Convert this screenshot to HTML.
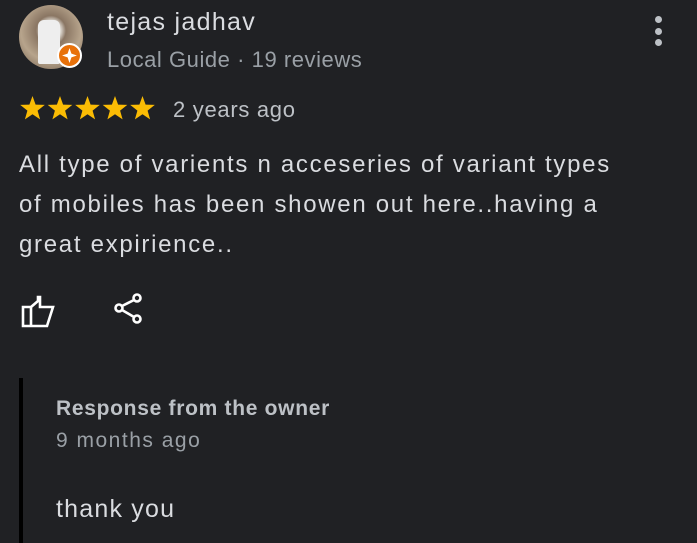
<!DOCTYPE html>
<html><head><style>
body{margin:0;width:697px;height:543px;background:#202124;font-family:"Liberation Sans",Roboto,sans-serif;overflow:hidden;position:relative;color:#e8eaed}
.a{position:absolute;white-space:nowrap}
</style></head><body>
<div class="a" style="left:19px;top:5px;width:64px;height:64px;border-radius:50%;background:radial-gradient(circle at 50% 40%,#e9e6e0 0 18%,#8a7663 30%,#b7a48c 60%,#6d5a48);"></div>
<div class="a" style="left:38px;top:20px;width:22px;height:44px;background:#eee;border-radius:6px 6px 2px 2px"></div>
<div class="a" style="left:57px;top:43px;width:25px;height:25px;border-radius:50%;background:#e8710a;border:2px solid #fff;box-sizing:border-box"></div>
<svg class="a" style="left:61px;top:47px" width="17" height="17" viewBox="0 0 16 16"><path d="M8 1 L9.8 6.2 L15 8 L9.8 9.8 L8 15 L6.2 9.8 L1 8 L6.2 6.2Z" fill="#fff"/></svg>
<div class="a" style="left:107px;top:8px;font-size:25px;color:#dadce0;letter-spacing:1.3px">tejas jadhav</div>
<div class="a" style="left:107px;top:47px;font-size:22px;color:#9aa0a6;letter-spacing:0.55px">Local Guide · 19 reviews</div>
<svg class="a" style="left:19px;top:95px" width="140" height="27" viewBox="0 0 140 27">
<defs><path id="s" d="M13.5 1 L16.6 9.6 L25.8 9.9 L18.6 15.6 L21.1 24.4 L13.5 19.3 L5.9 24.4 L8.4 15.6 L1.2 9.9 L10.4 9.6Z" fill="#fbbc04"/></defs>
<use href="#s"/><use href="#s" x="27.5"/><use href="#s" x="55"/><use href="#s" x="82.5"/><use href="#s" x="110"/></svg>
<div class="a" style="left:173px;top:97px;font-size:22px;color:#bdc1c6;letter-spacing:0.7px">2 years ago</div>
<div class="a" style="left:19px;top:145px;font-size:24px;line-height:40px;color:#dadce0;letter-spacing:1.7px">All type of varients n acceseries of variant types<br>of mobiles has been showen out here..having a<br>great expirience..</div>
<div class="a" style="left:655px;top:16px;width:7px;height:30px;display:flex;flex-direction:column;justify-content:space-between;align-items:center"><i style="width:7px;height:7px;border-radius:50%;background:#bdc1c6"></i><i style="width:7px;height:7px;border-radius:50%;background:#bdc1c6"></i><i style="width:7px;height:7px;border-radius:50%;background:#bdc1c6"></i></div>
<svg class="a" style="left:20px;top:294px" width="36" height="36" viewBox="0 0 36 36" fill="none" stroke="#fff" stroke-width="2.6"><path d="M3 13 H11 V32 H3Z M11 13 L18 7 V3 L20 3 V13 H33 L27 32 H11"/></svg>
<svg class="a" style="left:113px;top:292px" width="32" height="34" viewBox="0 0 32 34" fill="none" stroke="#fff" stroke-width="2.6"><circle cx="24" cy="6" r="3.5"/><circle cx="6" cy="16" r="3.5"/><circle cx="24" cy="27" r="3.5"/><path d="M9 14 L21 8 M9 18 L21 25"/></svg>
<div class="a" style="left:19px;top:378px;width:4px;height:165px;background:#000"></div>
<div class="a" style="left:56px;top:397px;font-size:21px;font-weight:bold;color:#bdc1c6;letter-spacing:0.7px">Response from the owner</div>
<div class="a" style="left:56px;top:429px;font-size:21px;color:#9aa0a6;letter-spacing:1.5px">9 months ago</div>
<div class="a" style="left:56px;top:495px;font-size:25px;color:#dadce0;letter-spacing:1.2px">thank you</div>
</body></html>
